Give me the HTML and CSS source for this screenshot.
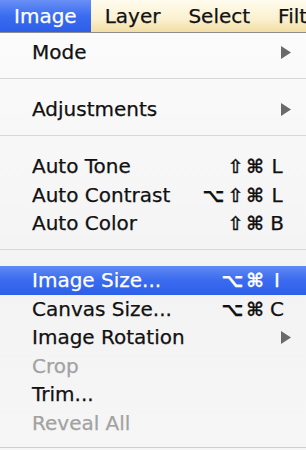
FILE: index.html
```html
<!DOCTYPE html>
<html lang="en">
  <head>
    <meta charset="UTF-8" />
    <title>Image menu</title>
    <link rel="stylesheet" href="styles.css">
  </head>
  <body>
    <div class="menubar">
      <span class="menubar-item active">Image</span>
      <span class="menubar-item">Layer</span>
      <span class="menubar-item">Select</span>
      <span class="menubar-item">Filter</span>
    </div>

    <ul class="menu">
      <li class="item">
        <span class="label">Mode</span>
        <svg class="arrow" width="10" height="13" viewBox="0 0 10 13"><polygon points="0,0 10,6.5 0,13" /></svg>
      </li>
      <li class="sep"></li>
      <li class="item">
        <span class="label">Adjustments</span>
        <svg class="arrow" width="10" height="13" viewBox="0 0 10 13"><polygon points="0,0 10,6.5 0,13" /></svg>
      </li>
      <li class="sep"></li>
      <li class="item">
        <span class="label">Auto Tone</span>
        <span class="shortcut"><span class="mods">⇧⌘</span><span class="key">L</span></span>
      </li>
      <li class="item">
        <span class="label">Auto Contrast</span>
        <span class="shortcut"><span class="mods">⌥⇧⌘</span><span class="key">L</span></span>
      </li>
      <li class="item">
        <span class="label">Auto Color</span>
        <span class="shortcut"><span class="mods">⇧⌘</span><span class="key">B</span></span>
      </li>
      <li class="sep"></li>
      <li class="item selected">
        <span class="label">Image Size...</span>
        <span class="shortcut"><span class="mods">⌥⌘</span><span class="key">I</span></span>
      </li>
      <li class="item">
        <span class="label">Canvas Size...</span>
        <span class="shortcut"><span class="mods">⌥⌘</span><span class="key">C</span></span>
      </li>
      <li class="item">
        <span class="label">Image Rotation</span>
        <svg class="arrow" width="10" height="13" viewBox="0 0 10 13"><polygon points="0,0 10,6.5 0,13" /></svg>
      </li>
      <li class="item disabled">
        <span class="label">Crop</span>
      </li>
      <li class="item">
        <span class="label">Trim...</span>
      </li>
      <li class="item disabled">
        <span class="label">Reveal All</span>
      </li>
    </ul>
  </body>
</html>
```

FILE: styles.css
```css
body {
  margin: 0;
  width: 306px;
  height: 450px;
  overflow: hidden;
  font-family: "DejaVu Sans", "Liberation Sans", sans-serif;
  font-size: 20px;
  color: #111;
  background-color: #f6f6f6;
  -webkit-text-stroke: 0.25px;
}

.menubar {
  display: flex;
  height: 32px;
  line-height: 32px;
  border-bottom: 1px solid #8c8c8c;
  background: linear-gradient(#fffcef, #fbf0cf 60%, #f2dea3);
  overflow: hidden;
  white-space: nowrap;
}

.menubar-item {
  padding: 0 14px;
  color: #111;
}

.menubar-item.active {
  color: #fff;
  background: linear-gradient(#6a90f5, #3a6cf0 50%, #2c5ee9);
}

.menu {
  list-style: none;
  margin: 0;
  padding: 5px 0 0;
  background: linear-gradient(#fbfbfb, #f3f3f3 60%, #f6f6f6);
  height: 409px;
  border-bottom: 1px solid #cfcfcf;
}

.item {
  display: flex;
  align-items: center;
  justify-content: space-between;
  height: 28.5px;
  line-height: 28.5px;
  padding: 0 15px 0 32px;
}

.item.selected {
  color: #fff;
  background: linear-gradient(#6189f3, #3a6bef 50%, #2d5fe9);
}

.item.disabled {
  color: #a2a2a2;
}

.arrow {
  fill: #6a6a6a;
}

.shortcut {
  display: flex;
  align-items: baseline;
  margin-right: 4px;
}

.mods {
  font-size: 19px;
  font-weight: bold;
  letter-spacing: 3px;
}

.key {
  width: 20px;
  text-align: center;
}

.sep {
  height: 1px;
  margin: 11px 0 16.5px;
  background-color: #d8d8d8;
}
```
